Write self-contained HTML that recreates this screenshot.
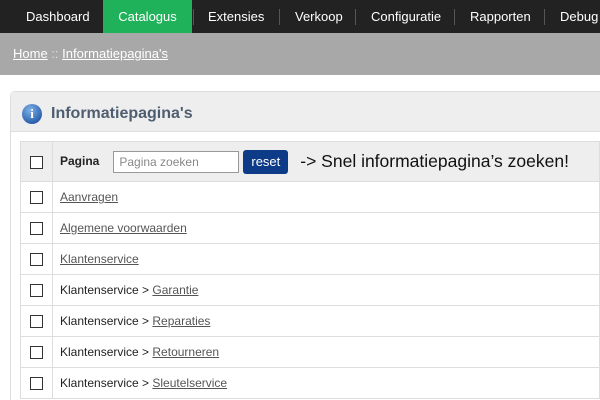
<!DOCTYPE html>
<html style="overflow:hidden;height:400px"><head><style>
*{margin:0;padding:0;box-sizing:border-box}
body{width:600px;height:400px;overflow:hidden;background:#fff;font-family:"Liberation Sans",Arial,sans-serif;position:relative}
.nav{position:absolute;left:0;top:0;width:600px;height:33px;background:#222}
.nav span{position:absolute;top:0;height:33px;line-height:34px;color:#fff;font-size:13px}
.nav .act{background:#20b25a;color:#fff}
.sep{position:absolute;top:9px;width:1px;height:16px;background:#555}
.bc{position:absolute;left:0;top:33px;width:600px;height:42px;background:#a8a8a8;font-size:13px;color:#fff;line-height:42px;padding-left:13px}
.bc a{color:#fff;text-decoration:underline}
.panel{position:absolute;left:10px;top:91px;width:590px;height:309px;border:1px solid #ddd;border-bottom:none;border-right:none;border-radius:5px 0 0 0;background:#fff}
.ph{height:40px;background:#eee;border-bottom:1px solid #ddd;border-radius:5px 0 0 0}
.ph .ic{position:absolute;left:11px;top:12px;width:20px;height:20px;border-radius:50%;background:radial-gradient(circle at 40% 30%,#7fb0e6,#2c63b0 70%,#1d4a8a);color:#fff;font:bold 13px "Liberation Serif",serif;text-align:center;line-height:20px}
.ph .t{position:absolute;left:40px;top:13px;font-size:16px;font-weight:bold;color:#4e5e70}
table{position:absolute;left:20px;top:141px;border-collapse:collapse;width:580px;font-size:12px}
td{border:1px solid #ddd;height:31px;color:#222}
td.c{width:32px;text-align:center}
.cb{display:inline-block;width:13px;height:13px;border:1px solid #333;vertical-align:middle;background:#fff}
td.n{padding-left:7px}
tr.h td{background:#eee;height:40px}
a{color:#555;text-decoration:underline}
input{width:126px;height:22px;border:1px solid #999;font:12px "Liberation Sans",sans-serif;padding-left:5px;color:#888;vertical-align:middle;margin-left:14px}
.btn{display:inline-block;background:#0e3b87;color:#fff;border-radius:3px;height:24px;line-height:23px;padding:0 8px;vertical-align:middle;margin-left:4px;font-size:13px}
.hint{font-size:17.5px;color:#111;margin-left:12px;vertical-align:middle}
</style></head><body>
<div class="nav">
<span style="left:26px">Dashboard</span>
<span class="act" style="left:103px;width:89px;text-align:center">Catalogus</span>
<div class="sep" style="left:193px"></div>
<span style="left:208px">Extensies</span>
<div class="sep" style="left:279px"></div>
<span style="left:295px">Verkoop</span>
<div class="sep" style="left:355px"></div>
<span style="left:371px">Configuratie</span>
<div class="sep" style="left:454px"></div>
<span style="left:470px">Rapporten</span>
<div class="sep" style="left:544px"></div>
<span style="left:560px">Debug</span>
</div>
<div class="bc"><a>Home</a> <span style="color:#ddd">::</span> <a>Informatiepagina's</a></div>
<div class="panel"><div class="ph"><div class="ic">i</div><div class="t">Informatiepagina's</div></div></div>
<table>
<tr class="h"><td class="c"><span class="cb"></span></td><td class="n"><b>Pagina</b><input value="Pagina zoeken"><span class="btn">reset</span><span class="hint">-&gt; Snel informatiepagina’s zoeken!</span></td></tr>
<tr><td class="c"><span class="cb"></span></td><td class="n"><a>Aanvragen</a></td></tr>
<tr><td class="c"><span class="cb"></span></td><td class="n"><a>Algemene voorwaarden</a></td></tr>
<tr><td class="c"><span class="cb"></span></td><td class="n"><a>Klantenservice</a></td></tr>
<tr><td class="c"><span class="cb"></span></td><td class="n">Klantenservice &gt; <a>Garantie</a></td></tr>
<tr><td class="c"><span class="cb"></span></td><td class="n">Klantenservice &gt; <a>Reparaties</a></td></tr>
<tr><td class="c"><span class="cb"></span></td><td class="n">Klantenservice &gt; <a>Retourneren</a></td></tr>
<tr><td class="c"><span class="cb"></span></td><td class="n">Klantenservice &gt; <a>Sleutelservice</a></td></tr>
</table>
</body></html>
